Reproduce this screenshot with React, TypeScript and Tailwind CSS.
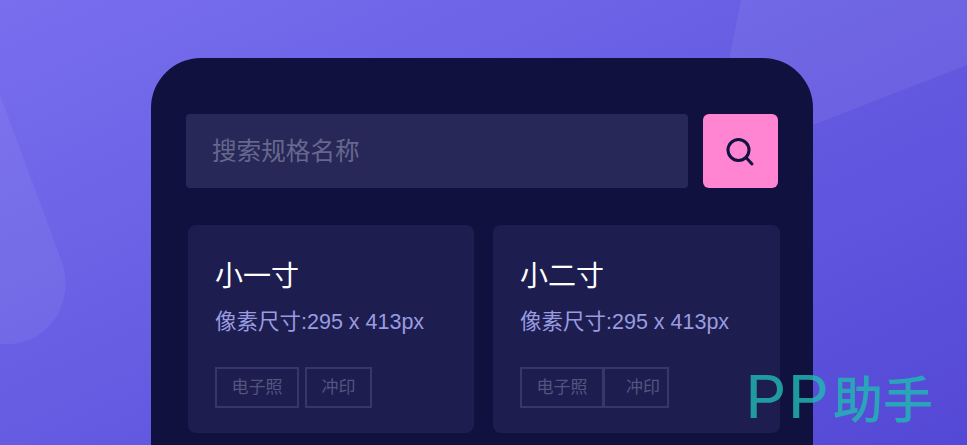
const font = { fontFamily: '"Liberation Sans", "Noto Sans CJK SC", sans-serif' }

function SearchIcon() {
  return (
    <svg width="32" height="32" viewBox="0 0 32 32" fill="none" stroke="#10123f" strokeWidth="3" strokeLinecap="round">
      <circle cx="13.5" cy="15" r="10.5" />
      <path d="M21 22.5l6 6.5" />
    </svg>
  )
}

function BgShapes() {
  return (
    <svg className="absolute inset-0" width="967" height="445" viewBox="0 0 967 445" fill="#ffffff" fillOpacity="0.06">
      <path d="M0 95 L62 262 C76 305 46 344 8 344 L0 344 Z" />
      <path d="M741 0 L727 70 L800 130 L967 65 L967 0 Z" />
    </svg>
  )
}

interface CardProps {
  title: string
  second?: boolean
}

function SizeCard({ title, second }: CardProps) {
  return (
    <div className="h-[208px] rounded-lg bg-[#1d1e4f] pl-[27px] pt-[32px]">
      <h3 className="text-[28px] leading-[40px] text-white">{title}</h3>
      <p className="mt-[10px] text-[21.5px] leading-[30px] text-[#9a9be0]">像素尺寸:295 x 413px</p>
      {second ? (
        <div className="mt-[30px] flex text-[17px] leading-[37px] text-[#54557f]">
          <span className="h-[41px] w-[84px] border-2 border-[#37386a] text-center">电子照</span>
          <span className="-ml-[1px] h-[41px] w-[66px] border-2 border-[#37386a] pl-[21px]">冲印</span>
        </div>
      ) : (
        <div className="mt-[30px] flex gap-[6px] text-[17px] leading-[37px] text-[#54557f]">
          <span className="h-[41px] w-[84px] border-2 border-[#37386a] text-center">电子照</span>
          <span className="h-[41px] w-[67px] border-2 border-[#37386a] text-center">冲印</span>
        </div>
      )}
    </div>
  )
}

export default function App() {
  return (
    <div
      className="relative h-[445px] w-[967px] overflow-hidden bg-gradient-to-br from-[#786eee] to-[#5448d6] pl-[151px] pt-[58px]"
      style={font}
    >
      <BgShapes />
      <div className="relative h-[420px] w-[662px] rounded-t-[50px] bg-[#10113f] px-[35px] pt-[56px]">
        <div className="flex gap-[15px]">
          <div className="flex h-[74px] w-[502px] items-center rounded bg-[#272858] pl-[26px] pt-[2px] text-[24.6px] text-[#66678d]">
            搜索规格名称
          </div>
          <button className="flex h-[74px] w-[75px] items-center justify-center rounded-md bg-[#ff85d3]">
            <SearchIcon />
          </button>
        </div>
        <div className="ml-[2px] mt-[37px] grid grid-cols-[286px_287px] gap-[19px]">
          <SizeCard title="小一寸" />
          <SizeCard title="小二寸" second />
        </div>
      </div>
      {/* watermark */}
      <div className="absolute left-[745px] top-[362px] flex items-baseline text-[#21b7b1d2]">
        <span className="w-[88px] origin-left scale-x-110 text-[59px] font-normal leading-[70px] tracking-[1px] [font-family:Inter,sans-serif]">PP</span>
        <span className="text-[50px] font-medium leading-[70px]">助手</span>
      </div>
    </div>
  )
}
